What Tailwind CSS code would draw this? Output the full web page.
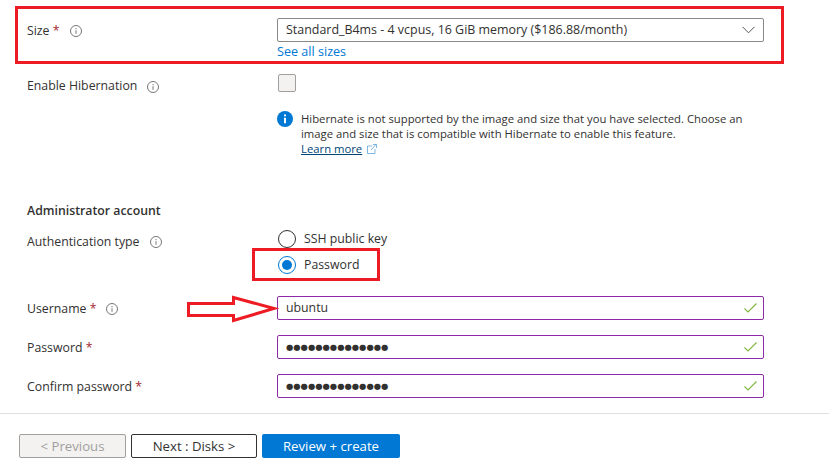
<!DOCTYPE html>
<html>
<head>
<meta charset="utf-8">
<script src="https://cdn.jsdelivr.net/npm/@tailwindcss/browser@4"></script>
</head>
<body class="bg-white">
<div class="relative w-[829px] h-[474px] overflow-hidden bg-white text-[#323130] text-[12.3px] font-['Open_Sans','Noto_Sans',sans-serif]">

  <div class="flex flex-col pt-[18px]">
    <!-- Size -->
    <div class="flex pl-[27px] h-[43px]">
      <div class="w-[250px] h-6 pt-[2px] flex items-center gap-[10px]">
        <span>Size <span class="text-[#a4262c]">*</span></span>
        <svg class="w-3 h-3 text-[#777]" viewBox="0 0 12 12" fill="none" stroke="currentColor"><circle cx="6" cy="6" r="5.5"/><path d="M6 5.2v3.6M6 3v1.2"/></svg>
      </div>
      <div class="w-[487px]">
        <div class="h-6 border border-[#8a8886] rounded-[2px] flex items-center justify-between pl-2 pr-[8px]">
          <span class="leading-none text-[12.45px]">Standard_B4ms - 4 vcpus, 16 GiB memory ($186.88/month)</span>
          <svg class="w-[13px] h-[8px] text-[#555]" viewBox="0 0 13 8" fill="none" stroke="currentColor"><path d="M.5.8l6 6 6-6"/></svg>
        </div>
        <div class="text-[#0078d4] text-[12.6px] leading-[18px] mt-[1px]">See all sizes</div>
      </div>
    </div>
    <!-- Hibernation -->
    <div class="flex pl-[27px] mt-[13px] h-[18px]">
      <div class="w-[250px] pt-[7px] flex items-center gap-[10px]">
        <span>Enable Hibernation</span>
        <svg class="w-3 h-3 text-[#777]" viewBox="0 0 12 12" fill="none" stroke="currentColor"><circle cx="6" cy="6" r="5.5"/><path d="M6 5.2v3.6M6 3v1.2"/></svg>
      </div>
      <div class="ml-px w-[18px] h-[18px] bg-[#f3f2f1] border border-[#a19f9d] rounded-[2px]"></div>
    </div>
    <!-- Info -->
    <div class="flex pl-[277px] mt-[19px] h-[46px]">
      <svg class="w-[16px] h-[16px] shrink-0 text-[#0078d4]" viewBox="0 0 16 16"><circle cx="8" cy="8" r="8" fill="currentColor"/><path d="M8 6.800v5.400M8 3.400v1.800" stroke="#fff" stroke-width="2"/></svg>
      <div class="ml-2 w-[448px] text-[11.3px] leading-[15px]">
        <p>Hibernate is not supported by the image and size that you have selected. Choose an image and size that is compatible with Hibernate to enable this feature.</p>
        <p class="flex items-center gap-[5px]"><span class="underline text-[#004578]">Learn more</span>
          <svg class="w-[10px] h-[10px] text-[#5ba3dc]" viewBox="0 0 10 10" fill="none" stroke="currentColor" stroke-width=".8"><path d="M5 2H.5v7.500H8V5M4 6l5-5.500M6 .5h3.500V4"/></svg>
        </p>
      </div>
    </div>
    <!-- Administrator -->
    <div class="pl-[27px] mt-[44px] h-[20px] leading-5 font-semibold">Administrator account</div>
    <!-- Auth type -->
    <div class="flex pl-[27px] mt-[9px] h-[44px]">
      <div class="w-[250px] h-[24px] flex items-center gap-[10px]">
        <span>Authentication type</span>
        <svg class="w-3 h-3 text-[#777]" viewBox="0 0 12 12" fill="none" stroke="currentColor"><circle cx="6" cy="6" r="5.5"/><path d="M6 5.2v3.6M6 3v1.200"/></svg>
      </div>
      <div class="ml-px flex flex-col gap-2">
        <div class="flex items-center gap-2 h-[18px]">
          <span class="w-[18px] h-[18px] rounded-full border border-[#323130]"></span>
          <span>SSH public key</span>
        </div>
        <div class="flex items-center gap-2 h-[18px]">
          <span class="w-[18px] h-[18px] rounded-full border border-[#0078d4] flex items-center justify-center"><span class="w-[10px] h-[10px] rounded-full bg-[#0078d4]"></span></span>
          <span>Password</span>
        </div>
      </div>
    </div>
    <!-- Username -->
    <div class="flex pl-[27px] mt-[22px] h-6 items-center">
      <div class="w-[250px] pt-[2px] flex items-center gap-[10px]">
        <span>Username <span class="text-[#a4262c]">*</span></span>
        <svg class="w-3 h-3 text-[#777]" viewBox="0 0 12 12" fill="none" stroke="currentColor"><circle cx="6" cy="6" r="5.5"/><path d="M6 5.2v3.6M6 3v1.200"/></svg>
      </div>
      <div class="w-[487px] h-6 border border-[#8e2ca8] rounded-[2px] flex items-center justify-between pl-2 pr-[6px]">
        <span>ubuntu</span>
        <svg class="w-[13px] h-[10px] text-[#7fb53c]" viewBox="0 0 13 10" fill="none" stroke="currentColor" stroke-width="1.100"><path d="M.5 5.500l3.500 3.500 8.500-8.500"/></svg>
      </div>
    </div>
    <!-- Password -->
    <div class="flex pl-[27px] mt-[15px] h-6 items-center">
      <div class="w-[250px] pt-[2px]">Password <span class="text-[#a4262c]">*</span></div>
      <div class="w-[487px] h-6 border border-[#8e2ca8] rounded-[2px] flex items-center justify-between pl-2 pr-[6px]">
        <span class="text-[8.4px] font-['DejaVu_Sans',sans-serif]">●●●●●●●●●●●●●●</span>
        <svg class="w-[13px] h-[10px] text-[#7fb53c]" viewBox="0 0 13 10" fill="none" stroke="currentColor" stroke-width="1.100"><path d="M.5 5.500l3.500 3.500 8.500-8.500"/></svg>
      </div>
    </div>
    <!-- Confirm -->
    <div class="flex pl-[27px] mt-[15px] h-6 items-center">
      <div class="w-[250px] pt-[2px]">Confirm password <span class="text-[#a4262c]">*</span></div>
      <div class="w-[487px] h-6 border border-[#8e2ca8] rounded-[2px] flex items-center justify-between pl-2 pr-[6px]">
        <span class="text-[8.4px] font-['DejaVu_Sans',sans-serif]">●●●●●●●●●●●●●●</span>
        <svg class="w-[13px] h-[10px] text-[#7fb53c]" viewBox="0 0 13 10" fill="none" stroke="currentColor" stroke-width="1.100"><path d="M.5 5.500l3.500 3.500 8.500-8.500"/></svg>
      </div>
    </div>
    <!-- Footer -->
    <div class="mt-[15px] border-t border-[#e1dfdd] pt-[20px] pl-[19px] flex gap-[5px] text-[13.2px]">
      <button class="w-[107px] h-6 pt-[1px] bg-[#f3f2f1] border border-[#a19f9d] rounded-[2px] text-[#a19f9d] flex items-center justify-center">&lt; Previous</button>
      <button class="w-[126px] h-6 pt-[1px] bg-white border border-[#323130] rounded-[2px] flex items-center justify-center">Next : Disks &gt;</button>
      <button class="w-[138px] h-6 pt-[1px] bg-[#0078d4] rounded-[2px] text-white flex items-center justify-center">Review + create</button>
    </div>
  </div>

  <!-- Red annotations -->
  <div class="absolute left-[15px] top-[6px] w-[769px] h-[58px] border-[3px] border-[#ed1c24]"></div>
  <div class="absolute left-[252px] top-[248px] w-[128px] h-[33px] border-[3px] border-[#ed1c24]"></div>
  <svg class="absolute left-[185px] top-[293px]" width="94" height="32" viewBox="0 0 94 32" fill="none" stroke="#ed1c24" stroke-width="3"><path d="M3.500 10.500H48.500V4.500L89 15.500 48.500 27.500V22.500H3.500Z"/></svg>
</div>
</body>
</html>
